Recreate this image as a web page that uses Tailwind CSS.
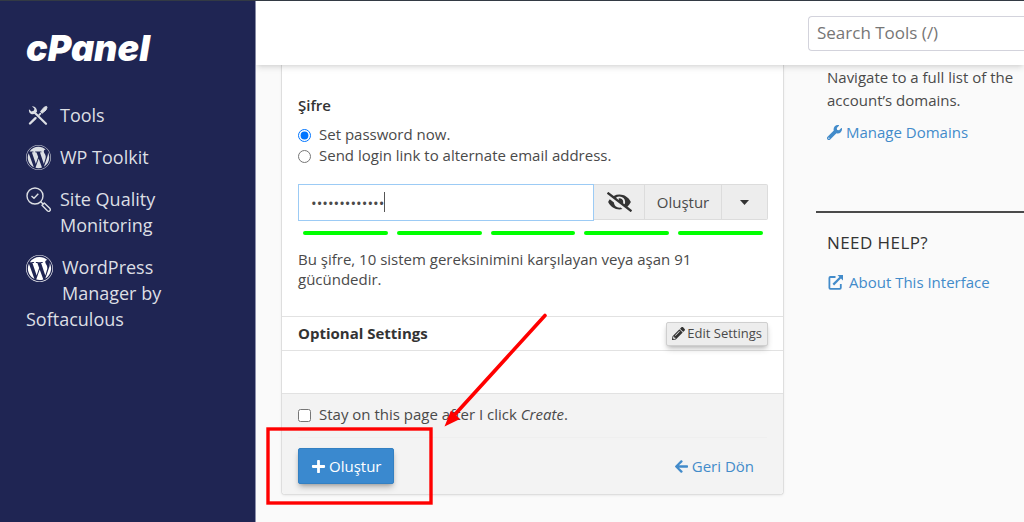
<!DOCTYPE html>
<html lang="tr">
<head>
  <meta charset="UTF-8">
  <meta name="viewport" content="width=device-width, initial-scale=1">
  <title>cPanel - Email Accounts</title>
  <script src="https://cdn.jsdelivr.net/npm/@tailwindcss/browser@4"></script>
</head>
<body class="relative flex min-h-screen overflow-x-hidden border-t border-[#333a44] bg-[#fafafa] font-['Open_Sans','Noto_Sans',sans-serif] text-[15px] text-[#4a4a4a]">

  <!-- Icons shared by several entries -->
  <svg class="hidden">
    <symbol id="wordpress" viewBox="8 8 496 496">
      <path d="M61.7 169.4l101.5 278C92.2 413 43.3 340.2 43.3 256c0-30.9 6.6-60.1 18.4-86.6zm337.9 75.9c0-26.3-9.4-44.5-17.5-58.7-10.8-17.5-20.9-32.4-20.9-49.9 0-19.6 14.8-37.8 35.7-37.8.9 0 1.8.1 2.8.2-37.9-34.7-88.3-55.9-143.7-55.9-74.3 0-139.7 38.1-177.8 95.9 5 .2 9.7.3 13.7.3 22.2 0 56.7-2.7 56.7-2.7 11.5-.7 12.8 16.2 1.4 17.5 0 0-11.5 1.3-24.3 2l77.5 230.4L249.8 247l-33.1-90.8c-11.5-.7-22.3-2-22.3-2-11.5-.7-10.1-18.2 1.3-17.5 0 0 35.1 2.7 56 2.7 22.2 0 56.7-2.7 56.7-2.7 11.5-.7 12.8 16.2 1.4 17.5 0 0-11.5 1.3-24.3 2l76.9 228.7 21.2-70.9c9-29.4 16-50.5 16-68.7zm-139.9 29.3l-63.8 185.5c19.1 5.6 39.2 8.7 60.1 8.7 24.8 0 48.5-4.3 70.6-12.1-.6-.9-1.1-1.9-1.5-2.9l-65.4-179.2zm183-120.7c.9 6.8 1.4 14 1.4 21.9 0 21.6-4 45.8-16.2 76.2l-65 187.9C426.2 403 468.7 334.5 468.7 256c0-37-9.4-71.8-26-102.1zM504 256c0 136.8-111.3 248-248 248C119.2 504 8 392.7 8 256 8 119.2 119.2 8 256 8c136.7 0 248 111.2 248 248zm-11.4 0c0-130.5-106.2-236.6-236.6-236.6C125.5 19.4 19.4 125.5 19.4 256S125.6 492.6 256 492.6c130.5 0 236.6-106.1 236.6-236.6z"/>
    </symbol>
  </svg>

  <!-- Sidebar -->
  <nav class="w-1/4 shrink-0 border-r border-[#8d91ad] bg-[#1f2553] pt-6 pr-16 pl-[26px] text-[#dcdfe4]">
    <a href="#" class="block font-['Inter','Liberation_Sans',sans-serif] text-[36px] leading-[46px] font-black text-white italic">cPanel</a>
    <ul class="mt-[31px] space-y-4 text-lg leading-[26px]">
      <li>
        <a href="#" class="flex">
          <svg class="mt-px mr-[9px] size-[25px] shrink-0" viewBox="0 0 25 25" fill="none" stroke="currentColor">
            <path d="M4 20.5L9.5 15.2" stroke-width="2.4" stroke-linecap="round"/>
            <path d="M8 9L20 20.8" stroke-width="2.2" stroke-linecap="round"/>
            <path d="M6 3.2L8.5 5.7L7.8 7.8L5.4 8.5L3 6.2C2.3 10.2 6 12.4 9 10.6L11 8.8C11.2 5.8 9 2.8 6 3.2z" fill="currentColor" stroke="none"/>
            <path d="M12.8 12.4L15 10.2" stroke-width="1.8"/>
            <path d="M14.6 8.4L18.2 4.2L20.6 3.4L21 4.6L20 7L16.2 10.2z" fill="currentColor" stroke-linejoin="round"/>
          </svg>
          <span>Tools</span>
        </a>
      </li>
      <li>
        <a href="#" class="flex">
          <svg class="mt-px mr-[9px] size-[25px] shrink-0" fill="currentColor"><use href="#wordpress"/></svg>
          <span>WP Toolkit</span>
        </a>
      </li>
      <li>
        <a href="#" class="flex">
          <svg class="mt-px mr-[9px] size-[25px] shrink-0" viewBox="0 0 25 25" fill="none" stroke="currentColor" stroke-width="1.4">
            <circle cx="9" cy="9" r="8"/>
            <path d="M5.5 9L8 11.3L12.3 6.8M14.6 14.6L17 17"/>
            <path d="M16 18.3L18.3 16L24 21.6C25 23.4 23.4 25 21.6 24z" stroke-linejoin="round"/>
          </svg>
          <span>Site Quality Monitoring</span>
        </a>
      </li>
      <li>
        <a href="#" class="block">
          <svg class="float-left mt-px mr-[9px] mb-3 size-[27px] fill-white"><use href="#wordpress"/></svg>
          WordPress Manager by Softaculous
        </a>
      </li>
    </ul>
  </nav>

  <div class="flex min-w-0 flex-1 flex-col">
    <!-- Top bar -->
    <header class="relative z-10 flex h-[64px] items-center justify-end overflow-hidden bg-white shadow-md/10">
      <input type="search" aria-label="Search Tools" placeholder="Search Tools (/)" class="h-[35px] w-[216px] rounded-l-[4px] border border-r-0 border-[#d3d3dc] bg-white pb-px pl-2 text-[17px] placeholder:text-[#767676]">
    </header>

    <div class="flex flex-1 items-start gap-8 pl-[25px]">
      <!-- Account form -->
      <form class="min-w-0 flex-1 rounded-b-[4px] border border-t-0 border-[#dedede] bg-white shadow-sm/5">
        <div class="pt-7 pr-[15px] pb-[27px] pl-4">
          <fieldset>
            <legend class="leading-6 font-semibold text-[#333]">Şifre</legend>
            <label class="mt-[7px] flex items-center leading-[21px]">
              <input type="radio" name="pw" checked class="mt-[2px] mr-2 size-[13px] accent-[#0075ff]">Set password now.
            </label>
            <label class="flex items-center leading-[21px]">
              <input type="radio" name="pw" class="mt-[2px] mr-2 size-[13px]">Send login link to alternate email address.
            </label>
          </fieldset>

          <div class="mt-[18px] flex h-9">
            <div class="relative flex-1">
              <input type="password" aria-label="Şifre" value="abcdefghijklm" class="h-[37px] w-full border border-[#9ccbf5] bg-white px-3">
              <span class="absolute top-2 left-[86px] h-5 w-px bg-[#555]"></span>
            </div>
            <button type="button" aria-label="Show password" class="w-[50px] border-y border-[#dcdcdc] bg-[#ededed]">
              <svg class="mx-auto w-[25px] fill-[#333]" viewBox="0 0 640 512"><path d="M320 400c-75.85 0-137.25-58.71-142.9-133.11L72.2 185.82c-13.79 17.3-26.48 35.59-36.72 55.59a32.35 32.35 0 0 0 0 29.19C89.71 376.41 197.07 448 320 448c26.91 0 52.87-4 77.89-10.46L346 397.39a144.13 144.13 0 0 1-26 2.61zm313.82 58.1l-110.55-85.44a331.25 331.25 0 0 0 81.25-102.07 32.35 32.35 0 0 0 0-29.19C550.29 135.59 442.93 64 320 64a308.15 308.15 0 0 0-147.32 37.7L45.46 3.37A16 16 0 0 0 23 6.18L3.37 31.45A16 16 0 0 0 6.18 53.9l588.36 454.73a16 16 0 0 0 22.46-2.81l19.64-25.27a16 16 0 0 0-2.82-22.45zm-183.72-142l-39.3-30.38A94.75 94.75 0 0 0 416 256a94.76 94.76 0 0 0-121.31-92.21A47.65 47.65 0 0 1 304 192a46.64 46.64 0 0 1-1.54 10l-73.61-56.89A142.31 142.31 0 0 1 320 112a143.92 143.92 0 0 1 144 144c0 21.63-5.29 41.79-13.9 60.11z"/></svg>
            </button>
            <button type="button" class="w-[78px] border border-[#dcdcdc] bg-[#ededed]">Oluştur</button>
            <button type="button" aria-label="Password options" class="w-[46px] rounded-r-[2px] border border-l-0 border-[#dcdcdc] bg-[#ededed]">
              <svg class="mx-auto w-[9px] fill-[#333]" viewBox="0 0 9 5"><path d="M0 0h9L4.5 5z"/></svg>
            </button>
          </div>

          <!-- Strength meter -->
          <div class="mt-[11px] grid grid-cols-5 gap-[9px] px-[5px]">
            <span class="h-1 rounded-full bg-[#00ff00]"></span>
            <span class="h-1 rounded-full bg-[#00ff00]"></span>
            <span class="h-1 rounded-full bg-[#00ff00]"></span>
            <span class="h-1 rounded-full bg-[#00ff00]"></span>
            <span class="h-1 rounded-full bg-[#00ff00]"></span>
          </div>
          <p class="mt-[14px] max-w-[410px] leading-5">Bu şifre, 10 sistem gereksinimini karşılayan veya aşan 91 gücündedir.</p>
        </div>

        <div class="flex h-[35px] items-center justify-between border-y border-[#e2e2e2] pr-[15px] pl-4">
          <h2 class="font-bold text-[#333]">Optional Settings</h2>
          <button type="button" class="flex h-6 items-center gap-[2px] rounded-[2px] border border-[#cfcfcf] bg-[#ededed] px-[5px] text-[13px] shadow-md/20">
            <svg class="size-[13px] fill-[#333]" viewBox="0 0 512 512"><path d="M497.9 142.1l-46.1 46.1c-4.7 4.7-12.3 4.7-17 0l-111-111c-4.7-4.7-4.7-12.3 0-17l46.1-46.1c18.7-18.7 49.1-18.7 67.9 0l60.1 60.1c18.8 18.7 18.8 49.1 0 67.9zM284.2 99.8L21.6 362.4.4 483.9c-2.9 16.4 11.4 30.6 27.8 27.8l121.5-21.3 262.6-262.6c4.7-4.7 4.7-12.3 0-17l-111-111c-4.8-4.7-12.4-4.7-17.1 0zM124.1 339.9c-5.5-5.5-5.5-14.3 0-19.8l154-154c5.5-5.5 14.3-5.5 19.8 0s5.5 14.3 0 19.8l-154 154c-5.5 5.5-14.3 5.5-19.8 0zM88 424h48v36.3l-64.5 11.3-31.1-31.1L51.7 376H88v48z"/></svg>
            Edit Settings
          </button>
        </div>
        <div class="h-[42px]"></div>

        <div class="rounded-b-[4px] border-t border-[#e2e2e2] bg-[#f3f3f3] px-4 pt-[9px] pb-[10px]">
          <label class="flex items-center leading-[22px]">
            <input type="checkbox" class="mt-[2px] mr-2 size-[13px]">
            <span>Stay on this page after I click <em>Create</em>.</span>
          </label>
          <div class="mt-3 flex items-center justify-between border-t border-[#efefef] pt-[10px] pr-[13px]">
            <button type="submit" class="flex h-9 items-center gap-[3px] rounded-[2px] border border-[#3380c2] bg-[#3a89cf] px-3 text-white shadow-md/25">
              <svg class="size-[15px] fill-current" viewBox="0 0 448 512"><path d="M416 208H272V64c0-17.67-14.33-32-32-32h-32c-17.67 0-32 14.33-32 32v144H32c-17.67 0-32 14.33-32 32v32c0 17.67 14.33 32 32 32h144v144c0 17.67 14.33 32 32 32h32c17.67 0 32-14.33 32-32V304h144c17.67 0 32-14.33 32-32v-32c0-17.67-14.33-32-32-32z"/></svg>
              Oluştur
            </button>
            <a href="#" class="flex items-center gap-1 text-[#428bca]">
              <svg class="h-[15px] w-[13px] fill-current" viewBox="0 0 448 512"><path d="M257.5 445.1l-22.2 22.2c-9.4 9.4-24.6 9.4-33.9 0L7 273c-9.4-9.4-9.4-24.6 0-33.9L201.4 44.7c9.4-9.4 24.6-9.4 33.9 0l22.2 22.2c9.5 9.5 9.3 25-.4 34.3L136.6 216H424c13.3 0 24 10.7 24 24v32c0 13.3-10.7 24-24 24H136.6l120.5 114.8c9.8 9.3 10 24.8.4 34.3z"/></svg>
              Geri Dön
            </a>
          </div>
        </div>
      </form>

      <!-- Help column -->
      <aside class="w-[208px] shrink-0">
        <div class="border-b-2 border-[#4a4a4a] pt-px pb-[67px] pl-[11px]">
          <p class="leading-[23px]">Navigate to a full list of the account’s domains.</p>
          <a href="#" class="mt-[9px] flex items-center gap-1 leading-[23px] text-[#428bca]">
            <svg class="size-[15px] fill-current" viewBox="0 0 512 512"><path d="M507.73 109.1c-2.24-9.03-13.54-12.09-20.12-5.51l-74.36 74.36-67.88-11.31-11.31-67.88 74.36-74.36c6.62-6.62 3.43-17.9-5.66-20.16-47.38-11.74-99.55.91-136.58 37.93-39.64 39.64-50.55 97.1-34.05 147.2L18.74 402.76c-24.99 24.99-24.99 65.51 0 90.5 24.99 24.99 65.51 24.99 90.5 0l213.21-213.21c50.12 16.71 107.47 5.68 147.37-34.22 37.07-37.07 49.7-89.32 37.91-136.73zM64 472c-13.25 0-24-10.75-24-24 0-13.26 10.75-24 24-24s24 10.74 24 24c0 13.25-10.75 24-24 24z"/></svg>
            Manage Domains
          </a>
        </div>
        <div class="pt-[18px] pl-[11px]">
          <h3 class="text-[17px] leading-6 font-medium tracking-wide text-[#333]">NEED HELP?</h3>
          <a href="#" class="mt-4 flex items-center gap-[5px] leading-[23px] text-[#428bca]">
            <svg class="size-[17px]" viewBox="0 0 17 17" fill="none" stroke="currentColor" stroke-width="1.8">
              <path d="M8.5 3H3.4Q2.4 3 2.4 4V13.8Q2.4 14.8 3.4 14.8H12.8Q13.8 14.8 13.8 13.8V10"/>
              <path d="M6.3 10.6L13.6 3.3" stroke-width="2.2"/>
              <path d="M10.5 1H16V6.5z" fill="currentColor" stroke="none"/>
            </svg>
            About This Interface
          </a>
        </div>
      </aside>
    </div>
  </div>

  <!-- Callout box and arrow drawn over the form -->
  <svg class="pointer-events-none absolute -top-px left-0 z-20 h-[522px] w-[1024px]" viewBox="0 0 1024 522" fill="none" stroke="#ff0000">
    <rect x="268" y="429" width="163" height="74" stroke-width="3.4"/>
    <path d="M545 315.5L454 415.5" stroke-width="3.6" stroke-linecap="round"/>
    <path d="M444.5 426.5L451 410.5L460 419z" fill="#ff0000" stroke="none"/>
  </svg>
</body>
</html>
